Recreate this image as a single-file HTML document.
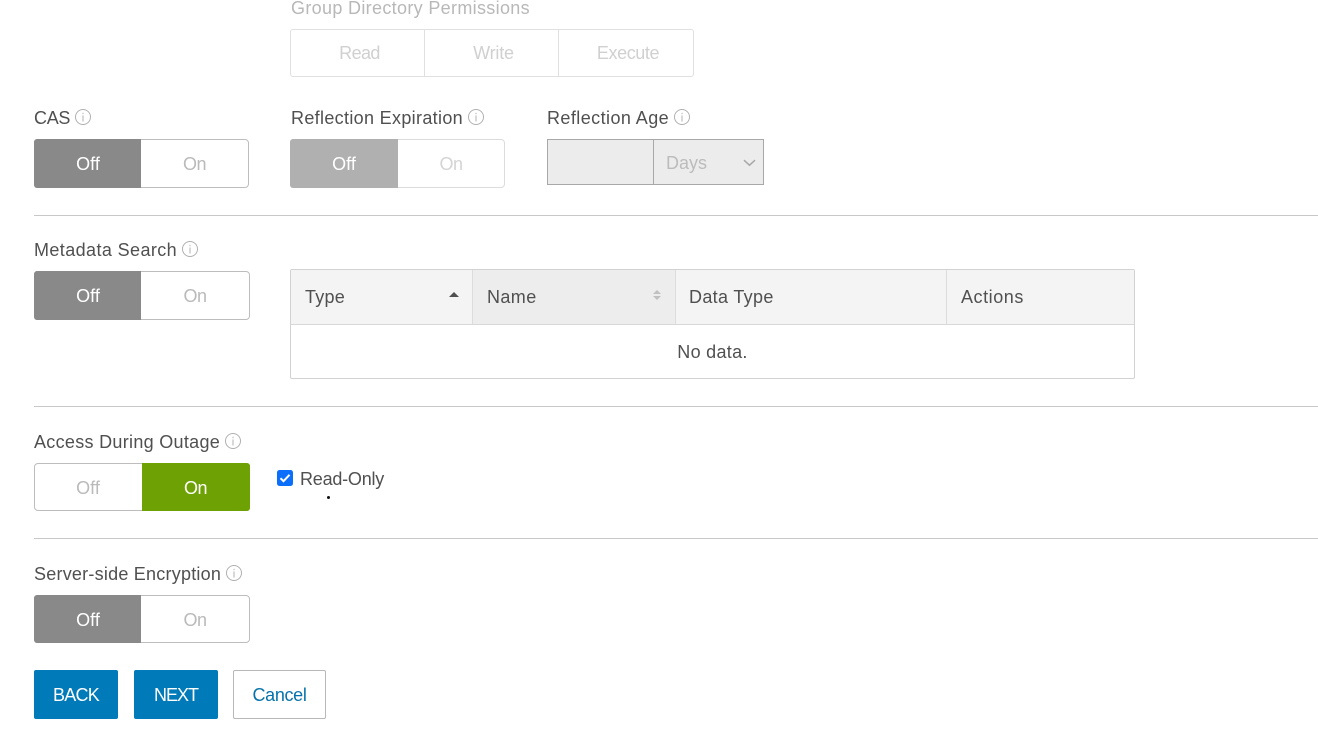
<!DOCTYPE html>
<html><head><meta charset="utf-8"><style>
html,body{margin:0;padding:0;background:#fff;width:1318px;height:738px;overflow:hidden}
body{position:relative;font-family:"Liberation Sans",sans-serif;font-size:18px;color:#505050}
.a{position:absolute;box-sizing:border-box}
.t{position:absolute;white-space:nowrap;line-height:24px;height:24px}
.c{text-align:center}
.i{position:absolute;width:16px;height:16px}
.hr{position:absolute;left:34px;width:1284px;height:1px;background:#c8c8c8}
.o{letter-spacing:-.5px}
</style></head><body>
<svg width="0" height="0" style="position:absolute"><defs><symbol id="inf" viewBox="0 0 16 16"><circle cx="8" cy="8" r="7.5" fill="none" stroke="#b0b0b0" stroke-width="1"/><rect x="7.5" y="6.5" width="1" height="6" fill="#b0b0b0"/><rect x="7.5" y="3.8" width="1" height="1.4" fill="#b0b0b0"/></symbol></defs></svg>

<div class="t" style="left:291px;top:-4px;color:#b8b8b8;letter-spacing:.33px">Group Directory Permissions</div>
<div class="a" style="left:290px;top:29px;width:404px;height:48px;border:1px solid #e0e0e0;border-radius:3px"></div>
<div class="a" style="left:424px;top:29px;width:1px;height:48px;background:#e0e0e0"></div>
<div class="a" style="left:558px;top:29px;width:1px;height:48px;background:#e0e0e0"></div>
<div class="t c" style="left:293px;top:41px;width:133px;color:#d0d0d0;letter-spacing:-.6px">Read</div>
<div class="t c" style="left:427px;top:41px;width:133px;color:#d0d0d0;letter-spacing:-.2px">Write</div>
<div class="t c" style="left:561px;top:41px;width:134px;color:#d0d0d0;letter-spacing:-.4px">Execute</div>

<div class="t" style="left:34px;top:106px;letter-spacing:-.3px">CAS</div><svg class="i" style="left:75px;top:109px"><use href="#inf"/></svg>
<div class="a" style="left:34px;top:139px;width:215px;height:49px;border:1px solid #bdbdbd;border-radius:4px"></div>
<div class="a" style="left:34px;top:139px;width:107px;height:49px;background:#898989;border-radius:3px 0 0 3px"></div>
<div class="t c" style="left:35px;top:152px;width:106px;color:#fff">Off</div>
<div class="t c o" style="left:141px;top:152px;width:107px;color:#bababa">On</div>

<div class="t" style="left:291px;top:106px;letter-spacing:.33px">Reflection Expiration</div><svg class="i" style="left:468px;top:109px"><use href="#inf"/></svg>
<div class="a" style="left:290px;top:139px;width:215px;height:49px;border:1px solid #dcdcdc;border-radius:4px"></div>
<div class="a" style="left:290px;top:139px;width:108px;height:49px;background:#b0b0b0;border-radius:3px 0 0 3px"></div>
<div class="t c" style="left:291px;top:152px;width:106px;color:#fff">Off</div>
<div class="t c o" style="left:398px;top:152px;width:106px;color:#d4d4d4">On</div>

<div class="t" style="left:547px;top:106px;letter-spacing:.43px">Reflection Age</div><svg class="i" style="left:674px;top:109px"><use href="#inf"/></svg>
<div class="a" style="left:547px;top:139px;width:217px;height:46px;border:1px solid #a8a8a8;background:#ececec"></div>
<div class="a" style="left:653px;top:139px;width:1px;height:46px;background:#a8a8a8"></div>
<div class="t" style="left:666px;top:151px;color:#bcbcbc">Days</div>
<svg class="a" style="left:743px;top:159px" width="13" height="8" viewBox="0 0 13 8"><path d="M1 1.2l5.5 5 5.5-5" fill="none" stroke="#a8a8a8" stroke-width="1.5"/></svg>

<div class="hr" style="top:215px"></div>

<div class="t" style="left:34px;top:238px;letter-spacing:.4px">Metadata Search</div><svg class="i" style="left:182px;top:241px"><use href="#inf"/></svg>
<div class="a" style="left:34px;top:271px;width:216px;height:49px;border:1px solid #bdbdbd;border-radius:4px"></div>
<div class="a" style="left:34px;top:271px;width:107px;height:49px;background:#898989;border-radius:3px 0 0 3px"></div>
<div class="t c" style="left:35px;top:284px;width:106px;color:#fff">Off</div>
<div class="t c o" style="left:141px;top:284px;width:108px;color:#bababa">On</div>

<div class="a" style="left:290px;top:269px;width:845px;height:110px;border:1px solid #d2d2d2;border-radius:2px"></div>
<div class="a" style="left:291px;top:270px;width:843px;height:54px;background:#f4f4f4"></div>
<div class="a" style="left:473px;top:270px;width:202px;height:54px;background:#ededed"></div>
<div class="a" style="left:291px;top:324px;width:843px;height:1px;background:#d8d8d8"></div>
<div class="a" style="left:472px;top:270px;width:1px;height:54px;background:#dcdcdc"></div>
<div class="a" style="left:675px;top:270px;width:1px;height:54px;background:#dcdcdc"></div>
<div class="a" style="left:946px;top:270px;width:1px;height:54px;background:#dcdcdc"></div>
<div class="t" style="left:305px;top:285px;letter-spacing:.25px">Type</div>
<svg class="a" style="left:449px;top:291px" width="10" height="7"><path d="M0 6L5 1l5 5z" fill="#505050"/></svg>
<div class="t" style="left:487px;top:285px;letter-spacing:.4px">Name</div>
<svg class="a" style="left:653px;top:289px" width="8" height="12"><path d="M0 5L4 1l4 4zM0 7l4 4 4-4z" fill="#c0c0c0"/></svg>
<div class="t" style="left:689px;top:285px;letter-spacing:.33px">Data Type</div>
<div class="t" style="left:961px;top:285px;letter-spacing:.55px">Actions</div>
<div class="t c" style="left:291px;top:340px;width:843px;letter-spacing:.3px">No data.</div>

<div class="hr" style="top:406px"></div>

<div class="t" style="left:34px;top:430px;letter-spacing:.3px">Access During Outage</div><svg class="i" style="left:225px;top:433px"><use href="#inf"/></svg>
<div class="a" style="left:34px;top:463px;width:216px;height:48px;border:1px solid #bdbdbd;border-radius:4px"></div>
<div class="a" style="left:142px;top:463px;width:108px;height:48px;background:#6ea204;border-radius:0 3px 3px 0"></div>
<div class="t c" style="left:35px;top:476px;width:106px;color:#bababa">Off</div>
<div class="t c o" style="left:142px;top:476px;width:107px;color:#fff">On</div>
<div class="a" style="left:277px;top:470px;width:16px;height:16px;background:#0b6ffb;border-radius:2.5px"></div>
<svg class="a" style="left:277px;top:470px" width="16" height="16"><path d="M3.5 8.2l3 3 6-6.4" fill="none" stroke="#fff" stroke-width="2"/></svg>
<div class="t" style="left:300px;top:467px;letter-spacing:-.22px">Read-Only</div>
<div class="a" style="left:327px;top:496px;width:3px;height:3px;background:#111;border-radius:50%"></div>

<div class="hr" style="top:538px"></div>

<div class="t" style="left:34px;top:562px;letter-spacing:.23px">Server-side Encryption</div><svg class="i" style="left:226px;top:565px"><use href="#inf"/></svg>
<div class="a" style="left:34px;top:595px;width:216px;height:48px;border:1px solid #bdbdbd;border-radius:4px"></div>
<div class="a" style="left:34px;top:595px;width:107px;height:48px;background:#898989;border-radius:3px 0 0 3px"></div>
<div class="t c" style="left:35px;top:608px;width:106px;color:#fff">Off</div>
<div class="t c o" style="left:141px;top:608px;width:108px;color:#bababa">On</div>

<div class="a" style="left:34px;top:670px;width:84px;height:49px;background:#007ab8;border-radius:2px"></div>
<div class="t c" style="left:34px;top:683px;width:84px;color:#fff;letter-spacing:-.75px">BACK</div>
<div class="a" style="left:134px;top:670px;width:84px;height:49px;background:#007ab8;border-radius:2px"></div>
<div class="t c" style="left:134px;top:683px;width:84px;color:#fff;letter-spacing:-1px">NEXT</div>
<div class="a" style="left:233px;top:670px;width:93px;height:49px;border:1px solid #b8b8b8;border-radius:2px"></div>
<div class="t c" style="left:233px;top:683px;width:93px;color:#0672ab;letter-spacing:-.33px">Cancel</div>
</body></html>
